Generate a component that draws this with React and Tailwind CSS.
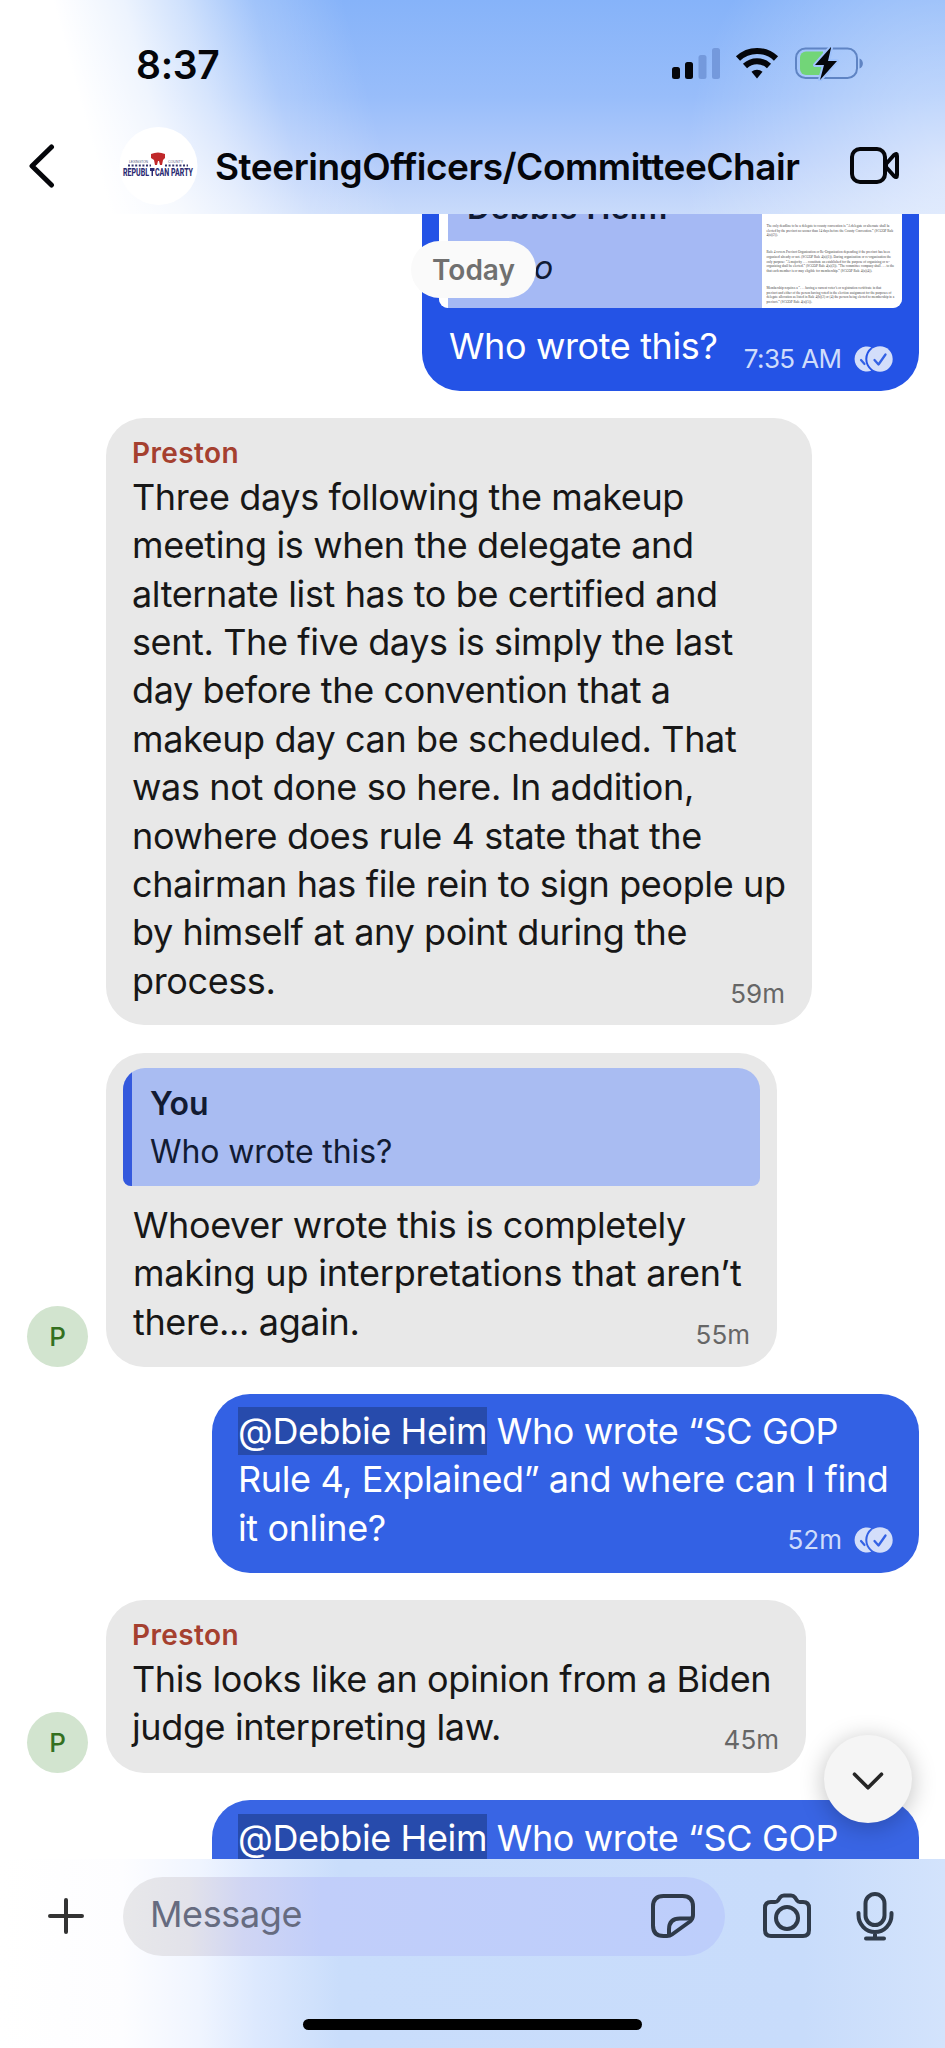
import { ChevronDown } from 'lucide-react';

const THREE_DAYS = [
  'Three days following the makeup',
  'meeting is when the delegate and',
  'alternate list has to be certified and',
  'sent. The five days is simply the last',
  'day before the convention that a',
  'makeup day can be scheduled. That',
  'was not done so here. In addition,',
  'nowhere does rule 4 state that the',
  'chairman has file rein to sign people up',
  'by himself at any point during the',
  'process.',
];

const DOCUMENT = [
  ['The only deadline to be a delegate to county convention is “A delegate or alternate shall be', 'elected by the precinct no sooner than 14 days before the County Convention.” (SCGOP Rule', '4(a)(2)).'],
  ['Rule 4 covers Precinct Organization or Re-Organization depending if the precinct has been', 'organized already or not. (SCGOP Rule 4(a)(1)). During organization or re-organization the', 'only purpose: “A majority . . . constitute an established for the purpose of organizing or re-', 'organizing shall be elected.” (SCGOP Rule 4(a)(3)). “The committee company shall . . . to the', 'that each member is or may eligible for membership.” (SCGOP Rule 4(a)(4)).'],
  ['Membership requires a “. . . having a current voter’s or registration certificate in that', 'precinct and either of the person having voted in the election assignment for the purposes of', 'delegate allocation as listed in Rule 4(b)(2) or (4) the person being elected to membership in a', 'precinct.” (SCGOP Rule 4(a)(5)).'],
  ['The next accurate and precinct president shall with until the count, selecting a certified set in'],
];

function StatusIcons() {
  return (
    <svg className="block" width="194" height="34" viewBox="0 0 194 34">
      <rect x="1" y="20" width="8" height="12" rx="2.5" fill="#05060a" />
      <rect x="14" y="15" width="8" height="17" rx="2.5" fill="#05060a" />
      <rect x="27.5" y="8" width="8" height="24" rx="2.5" fill="#7499dc" />
      <rect x="41" y="1" width="8" height="31" rx="2.5" fill="#7499dc" />
      <g fill="none" stroke="#05060a" strokeWidth="6">
        <path d="M67 11.5a27.5 27.5 0 0 1 38 0" />
        <path d="M74 19a17.5 17.5 0 0 1 24 0" />
      </g>
      <path d="M80.500 24.800a8.500 8.500 0 0 1 11 0L86 31.500z" fill="#05060a" />
      <rect x="125" y="1.500" width="61" height="29.500" rx="9.500" fill="none" stroke="#5f84c4" strokeWidth="2" />
      <path d="M188.500 11.500c4.500 1.500 4.500 8.500 0 10z" fill="#5f84c4" />
      <path d="M135 4.500h17v23.500h-17a6 6 0 0 1-6-6v-11.500a6 6 0 0 1 6-6z" fill="#72d578" />
      <path d="M160 0 144 18h9l-4 15 17-19h-9l3-13z" fill="#05060a" stroke="#9fc2fc" strokeWidth="4" paintOrder="stroke" strokeLinejoin="round" />
    </svg>
  );
}

function GroupLogo() {
  return (
    <svg className="shrink-0" width="80" height="80" viewBox="0 0 80 80">
      <circle cx="40.500" cy="40" r="39" fill="#fff" />
      <path d="M33 28q7-3 14 0v4l-2 2-1 5h-2l-1-4h-1l-1 4h-2l-1-5-3-2z" fill="#c0282a" />
      <g fontFamily="Liberation Sans, sans-serif" fontSize="3.500" fill="#555a80">
        <text x="11" y="37" textLength="19">LEXINGTON</text>
        <text x="50" y="37" textLength="15">COUNTY</text>
      </g>
      <path d="M10 39.500h23M47 39.500h23" stroke="#33366f" strokeWidth="2" strokeDasharray="2 1.600" />
      <g fontFamily="Roboto, sans-serif" fontSize="11" fontWeight="800" fill="#2a2a72">
        <text x="5" y="50" textLength="26" lengthAdjust="spacingAndGlyphs">REPUBL</text>
        <text x="37" y="50" textLength="38" lengthAdjust="spacingAndGlyphs">CAN PARTY</text>
      </g>
      <path d="M32 42h4.500v3h-1.500v5h-1.500v-5H32z" fill="#2a2a72" />
    </svg>
  );
}

function Header() {
  return (
    <header className="h-[214px] shrink-0 bg-[linear-gradient(75deg,#fff_0%,#fff_11%,rgba(255,255,255,0.85)_18%,rgba(255,255,255,0.6)_24%,rgba(255,255,255,0.22)_31%,rgba(255,255,255,0)_40%),radial-gradient(ellipse_260px_300px_at_100%_80%,rgba(255,255,255,0.5),rgba(255,255,255,0)),linear-gradient(to_bottom,#86b3f9_0%,#98bdfa_45%,#b2cbfa_75%,#c9dbfb_100%)]">
      <div className="flex h-[126px] items-start justify-between pl-[136px] pr-[80px] pt-[42px]">
        <span className="mt-px text-[39px] font-semibold leading-[44px] tracking-[-0.3px] text-[#05060a]">8:37</span>
        <div className="pt-[5px]">
          <StatusIcons />
        </div>
      </div>
      <div className="flex h-[80px] items-center">
        <svg className="ml-[28px] shrink-0" width="28" height="44" viewBox="0 0 28 44" fill="none" stroke="#05060a" strokeWidth="5" strokeLinecap="round" strokeLinejoin="round">
          <path d="M23.500 3 4 22l19.500 19" />
        </svg>
        <div className="ml-[62px] shrink-0">
          <GroupLogo />
        </div>
        <h1 className="ml-[17px] w-[593px] whitespace-nowrap pt-[2px] text-[37px] font-semibold leading-[48px] tracking-[-0.470px] text-[#05060a]">
          SteeringOfficers/CommitteeChair
        </h1>
        <svg className="ml-[41px] shrink-0" width="52" height="40" viewBox="0 0 52 40" fill="none" stroke="#05060a" strokeWidth="4" strokeLinejoin="round">
          <rect x="3" y="3" width="33" height="33" rx="8" />
          <path d="m37 18 8-9q3-2.500 3 1v19q0 3.500-3 1l-8-9z" />
        </svg>
      </div>
    </header>
  );
}

function ReadReceipt() {
  return (
    <svg className="ml-[12px] shrink-0" width="39" height="26" viewBox="0 0 39 26">
      <path d="M17.200 1.200A12.500 12.500 0 1 0 17.200 24.800A14.700 14.700 0 0 1 17.200 1.200z" fill="#d3defa" />
      <circle cx="26" cy="13" r="12.700" fill="#d3defa" />
      <path d="m7 14 3.500 4" stroke="#3462e4" strokeWidth="2.200" strokeLinecap="round" />
      <path d="m20.500 14 4 4.500 7-10" fill="none" stroke="#3462e4" strokeWidth="2.300" strokeLinecap="round" strokeLinejoin="round" />
    </svg>
  );
}

// The last line shares its row with the time stamp
function Lines({ lines, children }) {
  const last = lines.length - 1;
  return (
    <div className="whitespace-nowrap text-[36px] leading-[48.360px] tracking-[-0.380px]">
      {lines.slice(0, last).map((line, i) => (
        <p key={i}>{line}</p>
      ))}
      <div className="flex justify-between">
        <p>{lines[last]}</p>
        {children}
      </div>
    </div>
  );
}

function Time({ sent, children }) {
  return (
    <div className={sent ? 'mt-[22.500px] flex h-[28px] items-center text-[#cfdcfb]' : 'mt-[23px] flex h-[28px] items-center text-[#666]'}>
      <span className="text-[26px] leading-[28px] tracking-normal">{children}</span>
      {sent && <ReadReceipt />}
    </div>
  );
}

function Avatar() {
  return (
    <div className="flex h-[61px] w-[61px] shrink-0 items-center justify-center rounded-full bg-[#d2e4cf] text-[26px] font-medium text-[#34701f]">
      P
    </div>
  );
}

function Sender() {
  return <p className="text-[28px] font-semibold leading-[40px] tracking-[0.4px] text-[#a5402f]">Preston</p>;
}

function Mention() {
  return <span className="inline-block bg-[#274bac]">@Debbie Heim</span>;
}

function DocumentThumb() {
  return (
    <div className="h-[118px] w-[140px] overflow-hidden bg-white pl-[5px] pt-[34px] font-['Liberation_Serif',serif] text-[3.400px] leading-[4.600px] text-[#444]">
      {DOCUMENT.map((paragraph, i) => (
        <div key={i} className="mb-[12.700px]">
          {paragraph.map((line) => (
            <p key={line} className="whitespace-nowrap">{line}</p>
          ))}
        </div>
      ))}
    </div>
  );
}

function Messages() {
  return (
    <main className="relative h-[1645px] shrink-0 overflow-hidden">
      <div className="-mt-[40px] flex flex-col">
        <div className="ml-[422px] h-[217px] w-[496.500px] rounded-b-[38px] bg-[#2453e6] px-[17px] text-white">
          <div className="flex h-[134px] justify-between overflow-hidden rounded-b-[9px] bg-[#a5b9f4]">
            <div className="w-[9px] bg-white" />
            <div className="flex-1 pl-[19px] text-[32px] leading-[48px] text-[#101a34]">
              <p className="pt-[10px] font-semibold tracking-[0.3px]">Debbie Heim</p>
              <p className="-ml-[5px] pt-[12px] italic tracking-[0.8px]">Photo</p>
            </div>
            <div className="pt-[16px]">
              <DocumentThumb />
            </div>
          </div>
          <div className="pl-[10px] pr-[9px] pt-[14px]">
            <Lines lines={['Who wrote this?']}>
              <Time sent><span className="tracking-[-0.6px]">7:35 AM</span></Time>
            </Lines>
          </div>
        </div>

        <div className="ml-[106px] mt-[27px] h-[607px] w-[706px] rounded-[38px] bg-[#e8e8e8] pl-[26px] pr-[27px] pt-[15px] text-[#171717]">
          <Sender />
          <Lines lines={THREE_DAYS}>
            <Time>59m</Time>
          </Lines>
        </div>

        <div className="mt-[28px] flex items-end gap-[18px] pl-[27px]">
          <Avatar />
          <div className="h-[313.500px] w-[671px] rounded-[38px] bg-[#e8e8e8] px-[17px] pt-[15px] text-[#171717]">
            <div className="flex h-[118px] overflow-hidden rounded-b-[8px] rounded-t-[22px] bg-[#a9bcf2]">
              <div className="w-[9px] bg-[#3459dd]" />
              <div className="pl-[18px] pt-[12px] text-[32px] leading-[48px] tracking-[-0.1px] text-[#121b33]">
                <p className="font-semibold">You</p>
                <p>Who wrote this?</p>
              </div>
            </div>
            <div className="px-[10px] pt-[15px]">
              <Lines
                lines={[
                  'Whoever wrote this is completely',
                  <span className="tracking-[-0.2px]">making up interpretations that aren’t</span>,
                  'there... again.',
                ]}
              >
                <Time>55m</Time>
              </Lines>
            </div>
          </div>
        </div>

        <div className="ml-[212px] mt-[27px] h-[179.500px] w-[706.500px] rounded-[38px] bg-[#3361e4] pl-[26px] pr-[25.500px] pt-[13.500px] text-white">
          <Lines lines={[<><Mention /> Who wrote “SC GOP</>, 'Rule 4, Explained” and where can I find', 'it online?']}>
            <Time sent>52m</Time>
          </Lines>
        </div>

        <div className="mt-[27px] flex items-end gap-[18px] pl-[27px]">
          <Avatar />
          <div className="h-[172.500px] w-[700px] rounded-[38px] bg-[#e8e8e8] pl-[26px] pr-[27px] pt-[15px] text-[#171717]">
            <Sender />
            <Lines lines={['This looks like an opinion from a Biden', 'judge interpreting law.']}>
              <Time>45m</Time>
            </Lines>
          </div>
        </div>

        <div className="ml-[212px] mt-[27px] h-[179.500px] w-[706.500px] rounded-[38px] bg-[#3965e4] px-[26px] pt-[14px] text-white">
          <Lines lines={[<><Mention /> Who wrote “SC GOP</>]} />
        </div>
      </div>

      {/* Floating date and scroll button */}
      <div className="absolute left-[411px] top-[27px] flex h-[57px] w-[125px] items-center justify-center rounded-full bg-[#fafafa] text-[28px] font-semibold text-[#707070]">
        Today
      </div>
      <button className="absolute left-[824px] top-[1521px] flex h-[88px] w-[88px] items-center justify-center rounded-full bg-[#f5f5f5] pt-[3px] text-[#262626] shadow-[0_4px_24px_rgba(0,0,0,0.25)]" type="button">
        <ChevronDown size={54} strokeWidth={1.6} />
      </button>
    </main>
  );
}

function Composer() {
  return (
    <footer className="flex h-[189px] shrink-0 flex-col items-center bg-[linear-gradient(to_right,#fff_0%,#fdfdff_13%,#f0f5ff_21%,#dde9fe_27%,#c9ddfb_36%,#c8dcfb_85%,#d3e3fc_100%)]">
      <div className="flex w-full items-center pt-[17.500px]">
        <svg className="ml-[47px] shrink-0" width="38" height="38" viewBox="0 0 38 38" stroke="#333" strokeWidth="4" strokeLinecap="round">
          <path d="M19 3v32M3 19h32" />
        </svg>
        <div className="ml-[38px] flex h-[79px] w-[602px] items-center justify-between rounded-full bg-[linear-gradient(to_right,#e8e8ea_0%,#e2e2ea_11%,#d0d5f3_20%,#c1cefa_33%,#bdcefb_100%)] pl-[27px] pr-[29px]">
          <span className="-mt-[4px] text-[36px] tracking-[-0.4px] text-[#666b80]">Message</span>
          <svg width="46" height="46" viewBox="0 0 46 46" fill="none" stroke="#2f3a49" strokeWidth="4" strokeLinecap="round" strokeLinejoin="round">
            <path d="M17 43h-3.500Q3 43 3 32.500v-19Q3 3 13.500 3h19Q43 3 43 13.500V22q0 4-3 6.500L22 41.500Q20 43 17 43z" />
            <path d="M42 25.500H30q-11 0-11 11V42" />
          </svg>
        </div>
        <svg className="ml-[37px] shrink-0" width="50" height="46" viewBox="0 0 50 46" fill="none" stroke="#2f3a49" strokeWidth="4" strokeLinejoin="round">
          <path d="M3 15q0-6 6-6h4q2 0 3-1.500l2-3Q19.500 2.500 22 2.500h7q2.500 0 4 2l2 3Q36 9 38 9h3q6 0 6 6v22q0 6-6 6H9q-6 0-6-6z" />
          <circle cx="25" cy="25" r="11" />
        </svg>
        <svg className="ml-[43px] shrink-0" width="40" height="50" viewBox="0 0 40 50" fill="none" stroke="#2f3a49" strokeWidth="4" strokeLinecap="round">
          <rect x="10.500" y="3" width="19" height="31" rx="9.500" />
          <path d="M3.500 22v2a16.500 17 0 0 0 33 0v-2M20 41.500V47M11 47.500h18" />
        </svg>
      </div>
      <div className="mt-[63px] h-[11px] w-[339px] rounded-full bg-black" />
    </footer>
  );
}

export default function App() {
  return (
    <div className="flex h-[2048px] w-[945px] flex-col overflow-hidden bg-white font-['Inter',sans-serif]">
      <Header />
      <Messages />
      <Composer />
    </div>
  );
}
